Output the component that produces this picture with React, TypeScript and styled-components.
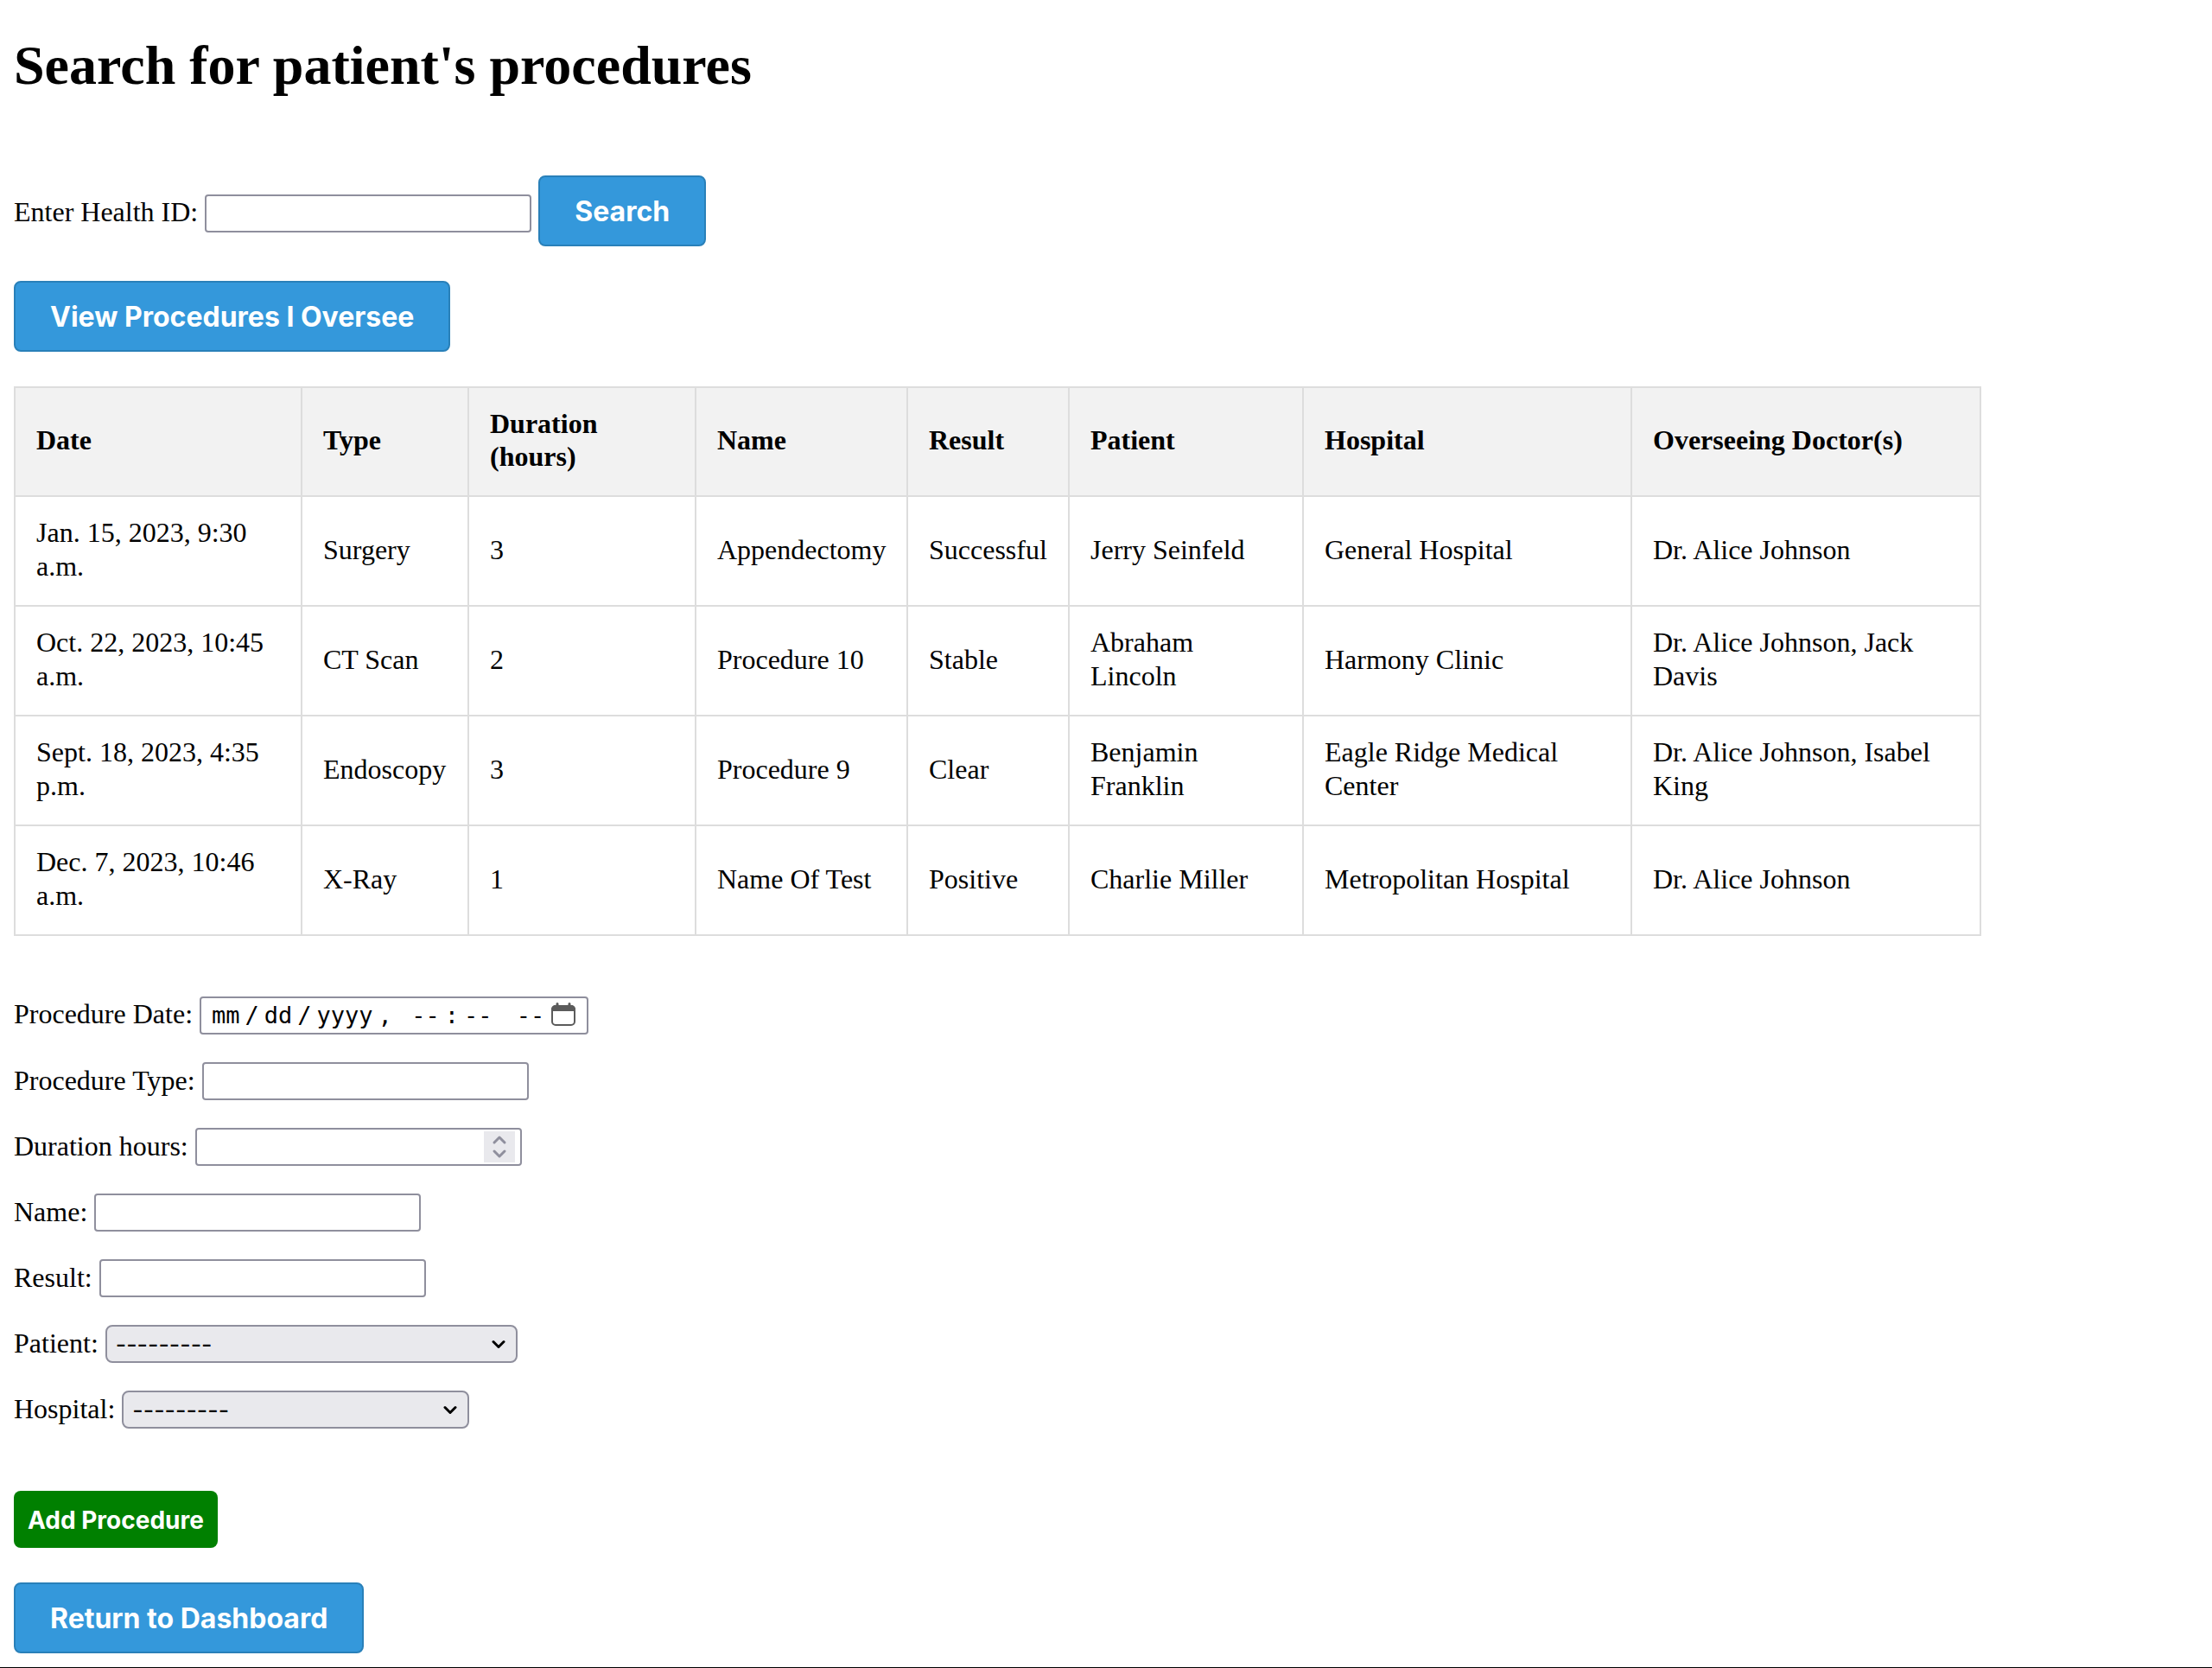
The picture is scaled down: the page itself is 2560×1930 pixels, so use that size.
import React from "react";
import styled, { createGlobalStyle, css } from "styled-components";

const serif = `"Liberation Serif", "Times New Roman", Times, serif`;
const sans = `Inter, "Liberation Sans", Arial, sans-serif`;
const mono = `"DejaVu Sans Mono", Menlo, monospace`;

const GlobalStyle = createGlobalStyle`
  *, *::before, *::after { box-sizing: border-box; }
  body {
    margin: 0;
    background: #fff;
    color: #000;
    font-family: ${serif};
    font-size: 32px;
    line-height: 38px;
  }
`;

const Page = styled.main`
  display: flex;
  flex-direction: column;
  align-items: flex-start;
  gap: 40px;
  padding: 40px 16px 16px;
  border-bottom: 1px solid #000;
`;

const Title = styled.h1`
  margin: 0 0 51px;
  font-size: 64px;
  line-height: 72px;
`;

const Row = styled.div`
  display: flex;
  align-items: baseline;
  gap: 8px;
`;

const SearchForm = styled.form`
  display: flex;
  align-items: baseline;
  gap: 8px;
`;

const EntryForm = styled.form`
  display: flex;
  flex-direction: column;
  align-items: flex-start;
  gap: 32px;
  padding-top: 30px;
`;

const Button = styled.button`
  padding: 21px 40px 19px;
  border: 2px solid #2980b9;
  border-radius: 8px;
  background: #3498db;
  color: #fff;
  font: 700 32px/38px ${sans};
  cursor: pointer;
`;

const AddButton = styled(Button)`
  margin-top: 40px;
  padding: 17px 16px 15px;
  border: 0;
  background: #008000;
  font-size: 28px;
  line-height: 34px;
`;

const control = css`
  height: 44px;
  margin: 0;
  padding: 2px 12px;
  border: 2px solid #8f8f9d;
  border-radius: 4px;
  background: #fff;
  color: #000;
  font: 27px/36px ${sans};
  appearance: none;
`;

const TextInput = styled.input`
  ${control}
  width: 378px;
  appearance: textfield;

  &::-webkit-inner-spin-button,
  &::-webkit-outer-spin-button {
    appearance: none;
    margin: 0;
  }
`;

const DateInput = styled.input`
  ${control}
  width: 450px;
  font-family: ${mono};

  &::-webkit-datetime-edit,
  &::-webkit-datetime-edit-fields-wrapper {
    padding: 0;
  }
  &::-webkit-datetime-edit-text {
    padding: 0 6px;
  }
  &::-webkit-datetime-edit-month-field,
  &::-webkit-datetime-edit-day-field,
  &::-webkit-datetime-edit-year-field,
  &::-webkit-datetime-edit-hour-field,
  &::-webkit-datetime-edit-minute-field,
  &::-webkit-datetime-edit-ampm-field {
    padding: 0;
    color: #000;
  }
  &::-webkit-calendar-picker-indicator {
    width: 28px;
    height: 32px;
    margin: 0;
    padding: 0;
    opacity: 0;
  }
`;

const Select = styled.select<{ $width: number }>`
  ${control}
  width: ${(p) => p.$width}px;
  padding: 3px 10px 1px;
  border-radius: 8px;
  background: #e9e9ed;
`;

const Adorned = styled.span`
  position: relative;
  display: inline-flex;
  align-items: baseline;
`;

const Adornment = styled.svg<{ $right: number }>`
  position: absolute;
  top: 4px;
  right: ${(p) => p.$right}px;
  height: 36px;
  pointer-events: none;
`;

const CalendarIcon = () => (
  <Adornment $right={15} width="28" viewBox="0 0 28 36" aria-hidden="true">
    <path d="M7 4.500v4M21 4.500v4" stroke="#5b5b5b" strokeWidth="3" strokeLinecap="round" />
    <rect x="1" y="7" width="26" height="22" rx="4" fill="none" stroke="#5b5b5b" strokeWidth="2" />
    <path d="M0 13v-2a5 5 0 0 1 5-5h18a5 5 0 0 1 5 5v2z" fill="#5b5b5b" />
  </Adornment>
);

const Spinner = () => (
  <Adornment $right={8} width="36" viewBox="0 0 36 36" aria-hidden="true">
    <rect width="36" height="36" fill="#e9e9ed" />
    <path
      d="M12 13l6-6 6 6M12 23l6 6 6-6"
      fill="none"
      stroke="#8f8f9d"
      strokeWidth="3"
      strokeLinecap="round"
      strokeLinejoin="round"
    />
  </Adornment>
);

const Chevron = () => (
  <Adornment $right={14} width="16" viewBox="0 0 16 36" aria-hidden="true">
    <path
      d="M2 15.500l6 6 6-6"
      fill="none"
      stroke="#000"
      strokeWidth="3"
      strokeLinecap="round"
      strokeLinejoin="round"
    />
  </Adornment>
);

const Table = styled.table`
  width: 90%;
  table-layout: fixed;
  border-collapse: collapse;
`;

const Col = styled.col<{ $width: number }>`
  width: ${(p) => p.$width}px;
`;

const HeadCell = styled.th`
  padding: 22px 24px 26px;
  border: 2px solid #ddd;
  background: #f2f2f2;
  text-align: left;
`;

const Cell = styled.td`
  padding: 22px 24px 25px;
  border: 2px solid #ddd;
  line-height: 39px;
`;

const columns = [
  { title: "Date", width: 332 },
  { title: "Type", width: 193 },
  { title: "Duration (hours)", width: 263 },
  { title: "Name", width: 245 },
  { title: "Result", width: 187 },
  { title: "Patient", width: 271 },
  { title: "Hospital", width: 380 },
  { title: "Overseeing Doctor(s)", width: 404 },
];

const procedures = [
  ["Jan. 15, 2023, 9:30 a.m.", "Surgery", "3", "Appendectomy", "Successful", "Jerry Seinfeld", "General Hospital", "Dr. Alice Johnson"],
  ["Oct. 22, 2023, 10:45 a.m.", "CT Scan", "2", "Procedure 10", "Stable", "Abraham Lincoln", "Harmony Clinic", "Dr. Alice Johnson, Jack Davis"],
  ["Sept. 18, 2023, 4:35 p.m.", "Endoscopy", "3", "Procedure 9", "Clear", "Benjamin Franklin", "Eagle Ridge Medical Center", "Dr. Alice Johnson, Isabel King"],
  ["Dec. 7, 2023, 10:46 a.m.", "X-Ray", "1", "Name Of Test", "Positive", "Charlie Miller", "Metropolitan Hospital", "Dr. Alice Johnson"],
];

const stop = (e: React.FormEvent) => e.preventDefault();

export default function App() {
  return (
    <>
      <GlobalStyle />
      <Page>
        <Title>Search for patient's procedures</Title>

        <SearchForm onSubmit={stop}>
          <label htmlFor="health-id">Enter Health ID:</label>
          <TextInput id="health-id" type="text" />
          <Button type="submit">Search</Button>
        </SearchForm>

        <Button type="button">View Procedures I Oversee</Button>

        <Table>
          <colgroup>
            {columns.map((c) => (
              <Col key={c.title} $width={c.width} />
            ))}
          </colgroup>
          <thead>
            <tr>
              {columns.map((c) => (
                <HeadCell key={c.title} scope="col">{c.title}</HeadCell>
              ))}
            </tr>
          </thead>
          <tbody>
            {procedures.map((row) => (
              <tr key={row[0]}>
                {row.map((value, i) => (
                  <Cell key={columns[i].title}>{value}</Cell>
                ))}
              </tr>
            ))}
          </tbody>
        </Table>

        <EntryForm onSubmit={stop}>
          <Row>
            <label htmlFor="date">Procedure Date:</label>
            <Adorned>
              <DateInput id="date" type="datetime-local" />
              <CalendarIcon />
            </Adorned>
          </Row>
          <Row>
            <label htmlFor="type">Procedure Type:</label>
            <TextInput id="type" type="text" />
          </Row>
          <Row>
            <label htmlFor="duration">Duration hours:</label>
            <Adorned>
              <TextInput id="duration" type="number" />
              <Spinner />
            </Adorned>
          </Row>
          <Row>
            <label htmlFor="name">Name:</label>
            <TextInput id="name" type="text" />
          </Row>
          <Row>
            <label htmlFor="result">Result:</label>
            <TextInput id="result" type="text" />
          </Row>
          <Row>
            <label htmlFor="patient">Patient:</label>
            <Adorned>
              <Select id="patient" $width={477}>
                <option>---------</option>
              </Select>
              <Chevron />
            </Adorned>
          </Row>
          <Row>
            <label htmlFor="hospital">Hospital:</label>
            <Adorned>
              <Select id="hospital" $width={402}>
                <option>---------</option>
              </Select>
              <Chevron />
            </Adorned>
          </Row>
          <AddButton type="submit">Add Procedure</AddButton>
        </EntryForm>

        <Button type="button">Return to Dashboard</Button>
      </Page>
    </>
  );
}
